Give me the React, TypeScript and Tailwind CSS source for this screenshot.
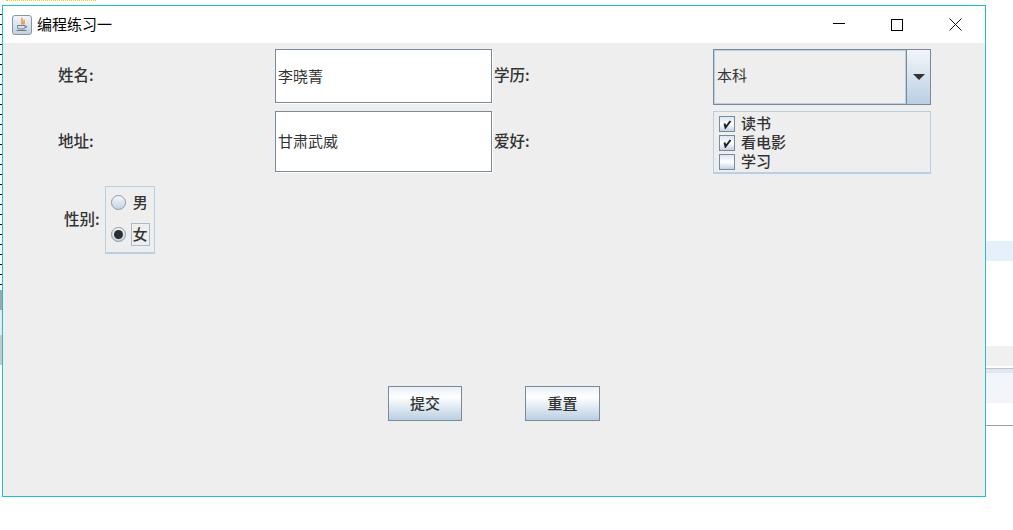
const font = "font-['Noto_Sans_CJK_SC','Liberation_Sans',sans-serif]";

function JavaIcon() {
  return (
    <svg width="20" height="20" viewBox="0 0 20 20" className="block">
      <defs>
        <linearGradient id="jbg" x1="0" y1="0" x2="0" y2="1">
          <stop offset="0" stopColor="#f4f6f9" />
          <stop offset="1" stopColor="#c3d0de" />
        </linearGradient>
      </defs>
      <rect x="0.5" y="0.5" width="19" height="19" rx="2.5" fill="url(#jbg)" stroke="#8496a8" />
      <path d="M10.5 3 C8 5.5 12 6.5 9.5 9.5 M12.5 5 C11 6.5 13 7.5 11.5 9.5" stroke="#e8872a" strokeWidth="1.3" fill="none" />
      <path d="M5.5 10.5 H13 V12.5 Q13 14 11 14 H7.5 Q5.5 14 5.5 12.5 Z" fill="none" stroke="#6d7f92" strokeWidth="1" />
      <path d="M13 11 H14.5 V12.5 H13" fill="none" stroke="#6d7f92" strokeWidth="0.8" />
      <path d="M4.5 15.5 H14.5" stroke="#6d7f92" strokeWidth="1" />
    </svg>
  );
}

function Check({ checked }: { checked: boolean }) {
  return (
    <span className="w-4 h-4 border border-[#7a8a99] bg-gradient-to-b from-[#dbe6f1] via-white to-[#c0d3e6] flex items-center justify-center shrink-0">
      {checked && (
        <svg width="10" height="10" viewBox="0 0 10 10">
          <path d="M2.5 4.5 L3.5 8.5 L8.5 2" stroke="#222" strokeWidth="2" fill="none" />
        </svg>
      )}
    </span>
  );
}

function Radio({ checked }: { checked: boolean }) {
  return (
    <span className="w-[15px] h-[15px] rounded-full border border-[#8a9aa9] bg-gradient-to-b from-[#f4f7fb] to-[#c3d4e6] flex items-center justify-center shrink-0">
      {checked && <span className="w-[9px] h-[9px] rounded-full bg-[#2d2d2d]" />}
    </span>
  );
}

function Label({ children, pad }: { children: string; pad?: boolean }) {
  return <div className={`${pad ? "pl-0.5" : ""} pb-[4px] text-[15.5px] font-medium text-[#333] flex items-center`}>{children}</div>;
}

function Input({ value, h }: { value: string; h: string }) {
  return (
    <div className={`${h} w-[217px] border border-[#7a8a99] bg-white flex items-center pl-[2px] text-[15px] text-[#333] shadow-[1px_1px_0_#fff]`}>
      {value}
    </div>
  );
}

function Btn({ children, w }: { children: string; w: string }) {
  return (
    <div className={`${w} h-[35px] border border-[#7a8a99] bg-gradient-to-b from-[#e8f0f8] via-white via-30% to-[#bacfe3] flex items-center justify-center text-[15px] font-medium text-[#333]`}>
      {children}
    </div>
  );
}

export default function App() {
  return (
    <div className={`${font} w-[1013px] h-[530px] bg-white overflow-hidden flex flex-col`}>
      <div className="h-[5px] pl-[6px] shrink-0">
        <div className="w-[90px] border-t border-dotted border-[#f5c518]" />
      </div>
      <div className="flex">
        <div className="w-[2px] shrink-0 flex flex-col">
          <div className="h-[285px] bg-[repeating-linear-gradient(180deg,#fff_0,#fff_9px,#111_9px,#111_10px)]" />
          <div className="h-[20px] bg-[#9aa]" />
          <div className="h-[25px] bg-[#e4eaf0]" />
          <div className="h-[30px] bg-[#c9c9c9]" />
        </div>
        <div className="w-[984px] h-[492px] shrink-0 border border-[#1ebfcf] flex flex-col">
          <div className="h-[37px] bg-white flex items-center shrink-0 pl-[9px] pr-[23px]">
            <JavaIcon />
            <span className="ml-[5px] text-[15px] text-black">编程练习一</span>
            <div className="ml-auto flex items-center gap-[46px]">
              <span className="w-3 h-px bg-black mb-[2px]" />
              <span className="w-3 h-3 border border-black" />
              <svg width="13" height="13" viewBox="0 0 13 13">
                <path d="M0.5 0.5 L12.5 12.5 M12.5 0.5 L0.5 12.5" stroke="#111" strokeWidth="1" />
              </svg>
            </div>
          </div>
          <div className="flex-1 bg-[#eeeeee] pl-[53px] pt-[6px]">
            <div className="grid grid-cols-[219px_219px_219px_219px] grid-rows-[56px_63px] gap-y-[6px]">
              <Label pad>姓名:</Label>
              <Input value="李晓菁" h="h-[54px]" />
              <Label>学历:</Label>
              <div className="flex h-[56px] w-[218px] border border-[#7a8a99]">
                <div className="flex-1 border border-[#b8d0e6] flex items-center pl-[2px] pb-[3px] text-[15px] text-[#333]">本科</div>
                <div className="w-[24px] border-l border-[#7a8a99] bg-gradient-to-b from-[#f2f6fa] to-[#bacfe3] flex items-center justify-center">
                  <span className="w-0 h-0 border-l-[6px] border-r-[6px] border-t-[6px] border-l-transparent border-r-transparent border-t-[#333]" />
                </div>
              </div>
              <Label pad>地址:</Label>
              <Input value="甘肃武威" h="h-[61px]" />
              <Label>爱好:</Label>
              <div className="h-[63px] w-[218px] border border-[#b8d0e6] border-b-2 flex flex-col pl-[5px] pt-[2px] text-[15px] font-medium text-[#333] leading-[20px]">
                <div className="flex items-center gap-[6px] h-[20px]"><Check checked /><span className="-mt-[2px]">读书</span></div>
                <div className="flex items-center gap-[6px] h-[20px]"><Check checked /><span className="-mt-[2px]">看电影</span></div>
                <div className="flex items-center gap-[6px] h-[20px]"><Check checked={false} /><span className="-mt-[2px]">学习</span></div>
              </div>
            </div>
            <div className="flex items-center mt-[12px] ml-[8px] gap-[5px]">
              <span className="text-[15.5px] font-medium text-[#333] pb-[2px]">性别:</span>
              <div className="w-[50px] h-[68px] border border-[#b8d0e6] border-b-2 flex flex-col gap-[10px] pl-[5px] pt-[5px] text-[15px] font-medium text-[#333]">
                <div className="flex items-center gap-[7px] h-[21px]"><Radio checked={false} />男</div>
                <div className="flex items-center gap-[5px] h-[23px]">
                  <Radio checked />
                  <span className="w-[19px] h-[23px] border border-[#a9bccd] flex items-center justify-center">女</span>
                </div>
              </div>
            </div>
            <div className="flex mt-[132px] ml-[332px] gap-[63px]">
              <Btn w="w-[74px]">提交</Btn>
              <Btn w="w-[75px]">重置</Btn>
            </div>
          </div>
        </div>
        <div className="flex-1 flex flex-col pt-[236px]">
          <div className="h-[20px] bg-[#e6f0fb]" />
          <div className="h-[85px]" />
          <div className="h-[20px] bg-[#f0f0f0]" />
          <div className="h-[2px]" />
          <div className="h-px bg-[#c4c4c4]" />
          <div className="h-[4px] bg-[#e0e6f5]" />
          <div className="h-[30px] bg-[#f4f5fb]" />
          <div className="h-[22px]" />
          <div className="h-px bg-[#a0a0a0]" />
        </div>
      </div>
    </div>
  );
}
